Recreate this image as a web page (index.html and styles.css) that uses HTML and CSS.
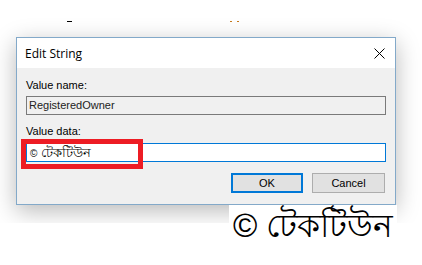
FILE: index.html
```html
<!DOCTYPE html>
<html lang="bn">
<head>
    <meta charset="UTF-8">
    <title>Edit String</title>
    <link rel="stylesheet" href="styles.css">
</head>
<body>
    <div class="scene">
        <span class="crumb crumb-dash"></span>
        <span class="crumb crumb-dots"></span>

        <div class="dialog">
            <div class="titlebar">
                <span class="title">Edit String</span>
                <svg class="close" width="11" height="11" viewBox="0 0 11 11">
                    <path d="M0.5 0.5 L10.5 10.5 M10.5 0.5 L0.5 10.5" stroke="#000" stroke-width="1" fill="none"/>
                </svg>
            </div>
            <div class="content">
                <div class="label">Value name:</div>
                <div class="field field-disabled">RegisteredOwner</div>

                <div class="label label-data">Value data:</div>
                <div class="field field-active"><span class="copy">©</span> টেকটিউন</div>

                <div class="buttons">
                    <button class="btn btn-default">OK</button>
                    <button class="btn">Cancel</button>
                </div>
            </div>
            <div class="highlight"></div>
        </div>
    </div>

    <div class="watermark">© টেকটিউন</div>
</body>
</html>
```

FILE: styles.css
```css
body {
    margin: 0;
    background-color: #fff;
    font-family: "Liberation Sans", Arial, sans-serif;
    position: relative;
    width: 422px;
    height: 265px;
    overflow: hidden;
}

.scene {
    position: relative;
    height: 223px;
    padding: 37px 0 0 16px;
    box-sizing: border-box;
    overflow: hidden;
}

/* bits of the text above the dialog that got cut off */
.crumb {
    position: absolute;
    top: 21px;
    height: 1px;
}

.crumb-dash {
    left: 67px;
    width: 5px;
    background-color: #000;
}

.crumb-dots {
    left: 230px;
    width: 9px;
    background: linear-gradient(to right, #c87a1e 0 2px, transparent 2px 7px, #c87a1e 7px 9px);
}

.dialog {
    position: relative;
    width: 380px;
    border: 1px solid #83a9c9;
    box-sizing: border-box;
    background-color: #f0f0f0;
    box-shadow: 0 6px 22px rgba(0, 0, 0, 0.28);
}

.titlebar {
    height: 30px;
    background-color: #fff;
    display: flex;
    align-items: center;
    justify-content: space-between;
    padding: 0 10px 0 8px;
}

.title {
    font-family: "Open Sans", sans-serif;
    font-size: 12px;
    color: #000;
}

.close {
    display: block;
}

.content {
    padding: 11px 9px 11px 9px;
    font-size: 11px;
    color: #000;
}

.label {
    line-height: 13px;
    height: 13px;
}

.label-data {
    margin-top: 10px;
}

.field {
    height: 19px;
    line-height: 17px;
    margin-top: 4px;
    padding: 0 2px;
    box-sizing: border-box;
    white-space: nowrap;
}

.field-disabled {
    border: 1px solid #7a7a7a;
    background-color: #f0f0f0;
    color: #222;
}

.field-active {
    margin-top: 5px;
    border: 1px solid #0078d7;
    background-color: #fff;
    font-size: 13px;
    padding-left: 3px;
}

.copy {
    font-size: 10px;
}

.buttons {
    display: flex;
    justify-content: flex-end;
    gap: 9px;
    margin-top: 11px;
    padding-right: 1px;
}

.btn {
    width: 73px;
    height: 20px;
    padding: 0;
    border: 1px solid #adadad;
    background-color: #e1e1e1;
    font-family: "Liberation Sans", Arial, sans-serif;
    font-size: 11px;
    color: #000;
}

.btn-default {
    width: 72px;
    border: 2px solid #0078d7;
}

.highlight {
    position: absolute;
    left: 4px;
    top: 101px;
    width: 122px;
    height: 30px;
    border: 5px solid #ed1c24;
    box-sizing: border-box;
}

.watermark {
    position: absolute;
    left: 229px;
    top: 205px;
    padding: 2px 4px 0;
    background-color: #fff;
    font-size: 33px;
    line-height: 38px;
    color: #000;
    white-space: nowrap;
}
```
